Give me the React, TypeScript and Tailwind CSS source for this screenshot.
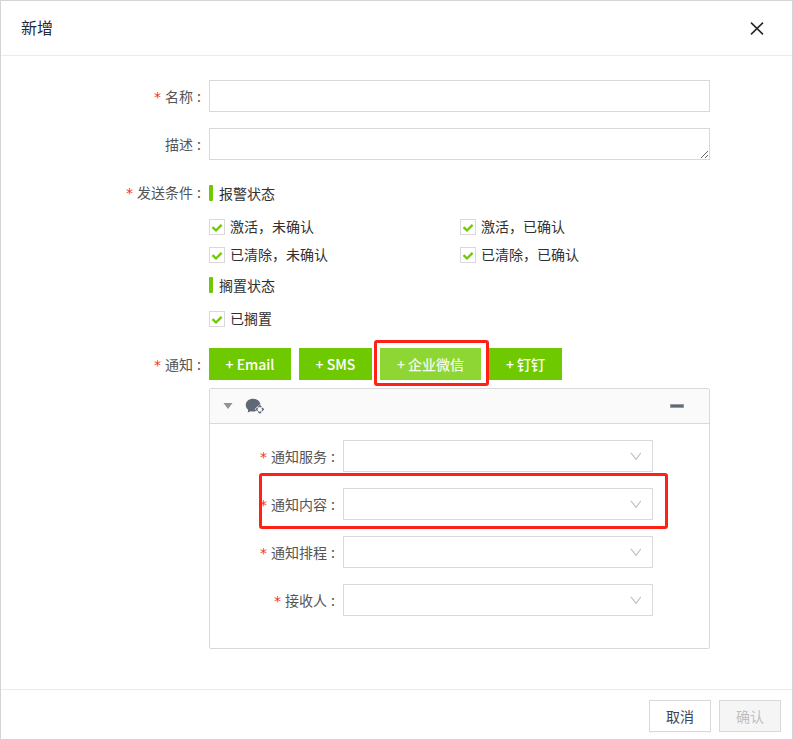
import React, { useState } from 'react';
import clsx from 'clsx';

interface FieldProps {
  label: string;
  required?: boolean;
  labelClass?: string;
  className?: string;
  children: React.ReactNode;
}

function Field({ label, required = true, labelClass, className, children }: FieldProps) {
  return (
    <div className={clsx('flex items-start', className)}>
      <div
        className={clsx(
          'flex h-8 shrink-0 items-center justify-end pr-2 text-[#555555]',
          labelClass,
        )}
      >
        {required && (
          <span className="mr-1 pt-0.5 font-['DejaVu_Sans',sans-serif] text-[#ff2a2d]">*</span>
        )}
        <span>{label}</span>
        <span className="ml-1">:</span>
      </div>
      {children}
    </div>
  );
}

function SectionTitle({ children }: { children: React.ReactNode }) {
  return (
    <div className="flex h-4 items-center">
      <span className="h-4 w-1 rounded-[1px] bg-[#6fc900]" />
      <span className="ml-1.5 pb-px leading-4">{children}</span>
    </div>
  );
}

function CheckItem({ label }: { label: string }) {
  const [checked, setChecked] = useState(true);

  return (
    <button
      type="button"
      role="checkbox"
      aria-checked={checked}
      onClick={() => setChecked(!checked)}
      className="flex h-4 w-[251px] items-center text-left"
    >
      <span className="flex h-4 w-4 items-center justify-center border border-[#d9d9d9] bg-white">
        {checked && (
          <svg width="14" height="14" viewBox="0 0 14 14" fill="none">
            <path d="M2.5 7.1 L6 10.5 L11.6 4.9" stroke="#6fc900" strokeWidth="2.3" />
          </svg>
        )}
      </span>
      <span className="ml-[5px] pb-0.5 leading-4">{label}</span>
    </button>
  );
}

function SelectBox() {
  return (
    <div className="flex h-8 w-[310px] items-center justify-end border border-[#d9d9d9] bg-white pr-[11px]">
      <svg width="11" height="9" viewBox="0 0 11 9" fill="none">
        <path d="M1 0.8 L6 7.4 L10.8 0.8" stroke="#bfbfbf" strokeWidth="1.1" />
      </svg>
    </div>
  );
}

const channels = [
  { name: 'Email', width: 'w-[82px]' },
  { name: 'SMS', width: 'w-[73px]' },
  { name: '企业微信', width: 'w-[101px]', active: true },
  { name: '钉钉', width: 'w-[73px]' },
];

const notifyFields = ['通知服务', '通知内容', '通知排程', '接收人'];

export default function App(): React.JSX.Element {
  return (
    <div className="flex h-[740px] w-[793px] flex-col border border-[#d4d4d4] bg-white font-['Noto_Sans_CJK_SC',sans-serif] text-sm font-normal text-[#303030]">
      <header className="flex h-[55px] shrink-0 items-center justify-between border-b border-[#ebebeb] pr-7 pl-5">
        <h1 className="pb-0.5 text-base text-[#1f2a3c]">新增</h1>
        <button type="button" aria-label="关闭">
          <svg width="14" height="13" viewBox="0 0 14 13" fill="none">
            <path d="M1 0.6 L13 12.4 M13 0.6 L1 12.4" stroke="#262626" strokeWidth="1.5" />
          </svg>
        </button>
      </header>

      <main className="flex-1 pt-6">
        <Field label="名称" labelClass="w-52">
          <input className="h-8 w-[501px] border border-[#d9d9d9] px-3 outline-none" />
        </Field>
        <Field label="描述" required={false} labelClass="w-52" className="mt-4">
          <textarea className="block h-8 w-[501px] resize border border-[#d9d9d9] px-3 py-1 outline-none" />
        </Field>

        <Field label="发送条件" labelClass="w-52" className="mt-4">
          <div className="flex flex-col pt-[9px]">
            <SectionTitle>报警状态</SectionTitle>
            <div className="mt-[18px] grid grid-cols-[251px_251px] gap-y-3">
              <CheckItem label="激活，未确认" />
              <CheckItem label="激活，已确认" />
              <CheckItem label="已清除，未确认" />
              <CheckItem label="已清除，已确认" />
            </div>
            <div className="mt-3.5 mb-[18px]">
              <SectionTitle>搁置状态</SectionTitle>
            </div>
            <CheckItem label="已搁置" />
          </div>
        </Field>

        <Field label="通知" labelClass="w-52" className="mt-[21px]">
          <div className="w-[501px]">
            <div className="relative flex gap-2">
              {channels.map(({ name, width, active }) => (
                <button
                  key={name}
                  type="button"
                  className={clsx(
                    'h-8 text-center font-medium whitespace-nowrap',
                    width,
                    active ? 'bg-[#8dd633] text-white/90' : 'bg-[#6fc900] text-white',
                  )}
                >
                  + {name}
                </button>
              ))}
              <span className="pointer-events-none absolute -top-2 left-[165px] h-[46px] w-[115px] rounded-[3px] border-[3px] border-[#ff2016]" />
            </div>

            <section className="mt-2 h-[261px] rounded-[2px] border border-[#d9d9d9]">
              <div className="flex h-[35px] items-center border-b border-[#d9d9d9] bg-[#fafafa] pr-[25px] pl-[13px]">
                <svg width="10" height="6" viewBox="0 0 10 6">
                  <path d="M0.5 0 H9.5 L5 6 Z" fill="#8e939c" />
                </svg>
                <svg className="ml-3" width="20" height="16" viewBox="0 0 20 16">
                  <path
                    d="M8.2 0.8 C3.9 0.8 0.8 3.4 0.8 7 C0.8 9 1.7 10.7 3.1 11.8 L2.8 14.4 L5.8 13.2 C6.6 13.4 7.4 13.5 8.2 13.5 C9.3 13.5 10.5 13.2 11.4 12.8 L15.5 8 C15.8 3.9 12.3 0.8 8.2 0.8 Z"
                    fill="#5f6874"
                  />
                  <path d="M14.8 6.3 L19.8 11.3 L14.8 16 L9.6 11.3 Z" fill="#fafafa" />
                  <g fill="none" stroke="#5f6874" strokeWidth="1.4">
                    <path d="M13.3 9.2 L14.8 7.8 L16.3 9.2" />
                    <path d="M16.9 9.9 L18.3 11.3 L16.9 12.7" />
                    <path d="M16.3 13.5 L14.8 14.9 L13.3 13.5" />
                    <path d="M12.7 12.7 L11.3 11.3 L12.7 9.9" />
                  </g>
                </svg>
                <span className="ml-auto h-1 w-3.5 border border-[#969ca4] bg-[#5f6874]" />
              </div>

              <div className="relative flex flex-col gap-4 pt-4">
                {notifyFields.map((label) => (
                  <Field key={label} label={label} labelClass="w-[133px]">
                    <SelectBox />
                  </Field>
                ))}
                <span className="pointer-events-none absolute top-[49px] left-[49px] h-[56px] w-[409px] rounded-[3px] border-[3px] border-[#ff2016]" />
              </div>
            </section>
          </div>
        </Field>
      </main>

      <footer className="flex h-[50px] shrink-0 items-start justify-end gap-2 border-t border-[#ebebeb] pt-2.5 pr-[11px]">
        <button
          type="button"
          className="h-8 w-[62px] border border-[#d9d9d9] bg-white text-[#3b4453] shadow-[0_2px_0_rgba(0,0,0,0.015)]"
        >
          取消
        </button>
        <button
          type="button"
          disabled
          className="h-8 w-[62px] border border-[#d9d9d9] bg-[#f5f5f5] text-[#bfbfbf]"
        >
          确认
        </button>
      </footer>
    </div>
  );
}
